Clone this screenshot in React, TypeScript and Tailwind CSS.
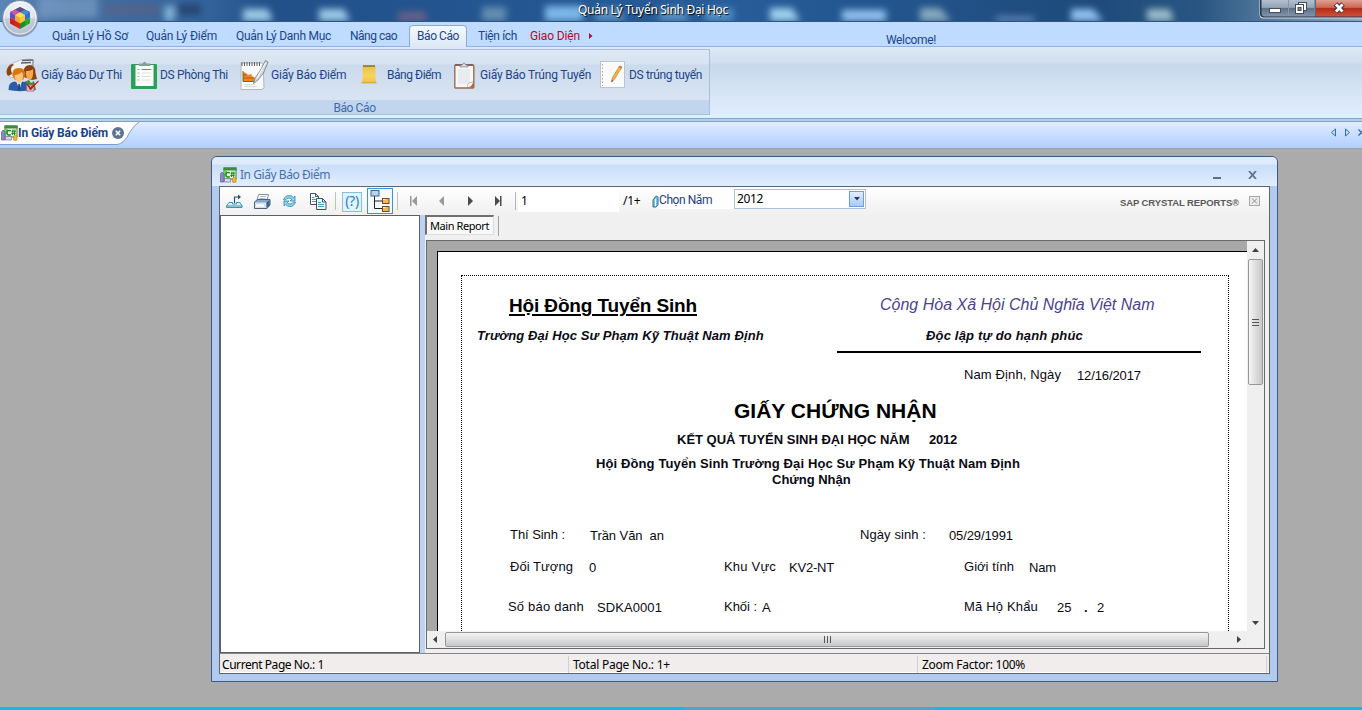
import type { ReactNode } from "react";

function AeroGlass() {
  return (
    <svg className="absolute inset-0" width="1362" height="21" viewBox="0 0 1362 21">
      <defs>
        <linearGradient id="glass" x1="0" y1="0" x2="1" y2="0">
          <stop offset="0" stopColor="#5a85b9" />
          <stop offset=".05" stopColor="#466f9f" />
          <stop offset=".15" stopColor="#33639b" />
          <stop offset=".2" stopColor="#225089" />
          <stop offset=".55" stopColor="#265c99" />
          <stop offset=".8" stopColor="#1e4a7b" />
          <stop offset=".88" stopColor="#285581" />
          <stop offset="1" stopColor="#8fa9c1" />
        </linearGradient>
        <filter id="soft" x="-20%" y="-80%" width="140%" height="260%">
          <feGaussianBlur stdDeviation="3.5" />
        </filter>
      </defs>
      <rect width="1362" height="21" fill="url(#glass)" />
      <g filter="url(#soft)">
        <rect x="38" y="-4" width="60" height="22" fill="#8fb0d4" opacity=".5" />
        <rect x="105" y="5" width="55" height="9" fill="#6b5b78" opacity=".5" />
        <rect x="165" y="6" width="9" height="15" fill="#9fd0ee" opacity=".8" />
        <rect x="177" y="4" width="24" height="11" fill="#1f4069" opacity=".8" />
        <path d="M243 9h25l5 12h-30z" fill="#9ccbe6" />
        <path d="M319 9h25l6 12h-31z" fill="#9ccbe6" />
        <rect x="398" y="12" width="28" height="9" fill="#7d6488" opacity=".8" />
        <rect x="482" y="7" width="24" height="14" fill="#7fa5bd" opacity=".7" />
        <rect x="545" y="6" width="38" height="15" fill="#7db7ea" />
        <path d="M596 8h24l5 13h-30z" fill="#6ea7d6" opacity=".7" />
        <path d="M660 8h24l5 13h-30z" fill="#6ea7d6" opacity=".7" />
        <rect x="705" y="8" width="28" height="13" fill="#5e9ed2" opacity=".8" />
        <path d="M770 8h22l8 13h-30z" fill="#9fd0ee" />
        <rect x="842" y="10" width="44" height="11" fill="#93c1f0" />
        <path d="M920 8h20l11 13h-31z" fill="#85a9bd" />
        <rect x="996" y="17" width="38" height="4" fill="#7698d3" />
        <path d="M1071 9h22l10 12h-32z" fill="#8fc3ef" />
        <path d="M1147 9h23l4 12h-27z" fill="#9bbccb" />
      </g>
    </svg>
  );
}

function WindowButtons() {
  return (
    <svg className="absolute left-[1259px] top-0" width="103" height="19" viewBox="0 0 103 19">
      <defs>
        <linearGradient id="wb" x1="0" y1="0" x2="0" y2="1">
          <stop offset="0" stopColor="#b3c0ce" />
          <stop offset=".45" stopColor="#93a3b6" />
          <stop offset=".5" stopColor="#5d7085" />
          <stop offset="1" stopColor="#8296ab" />
        </linearGradient>
        <linearGradient id="wr" x1="0" y1="0" x2="0" y2="1">
          <stop offset="0" stopColor="#e0a093" />
          <stop offset=".45" stopColor="#cb6753" />
          <stop offset=".5" stopColor="#b32c16" />
          <stop offset="1" stopColor="#cf5038" />
        </linearGradient>
      </defs>
      <path d="M.5 0V14q0 4.500 4 4.500H103V0z" fill="#d6e0ea" />
      <path d="M1 0V13.500q0 4 4 4H103V0z" fill="#26364a" />
      <path d="M2.500 0V12.500q0 4 3 4H29V0z" fill="url(#wb)" />
      <rect x="30" width="25.500" height="16.500" fill="url(#wb)" />
      <rect x="57" width="46" height="16.500" fill="url(#wr)" />
      <path d="M29.500 0v16.500M56 0v16.500" stroke="#e1e8ee" strokeOpacity=".55" />
      <rect x="10.500" y="8.500" width="11" height="4" fill="#fff" stroke="#454c58" />
      <rect x="39.500" y="2.500" width="8" height="8" fill="#fff" stroke="#454c58" />
      <rect x="36.500" y="4.500" width="8" height="9" fill="#fff" stroke="#454c58" />
      <rect x="39" y="7.500" width="3" height="3" fill="#7a8798" stroke="#454c58" />
      <path d="M76.500 4l7.500 8m0-8l-7.500 8" stroke="#4d3a40" strokeWidth="5" />
      <path d="M77 4.300l6.500 7.400m0-7.400l-6.500 7.400" stroke="#fff" strokeWidth="2.800" />
    </svg>
  );
}

function Orb() {
  return (
    <svg className="absolute left-0 top-0" width="40" height="40" viewBox="0 0 40 40">
      <defs>
        <radialGradient id="orb" cx=".5" cy=".35" r=".65">
          <stop offset="0" stopColor="#fff" />
          <stop offset=".6" stopColor="#dfe5ee" />
          <stop offset="1" stopColor="#a9b7ca" />
        </radialGradient>
      </defs>
      <circle cx="20" cy="19" r="18" fill="#5f7797" opacity=".5" />
      <circle cx="20" cy="18" r="17.500" fill="url(#orb)" stroke="#7b8ba3" />
      <path d="M3.500 19a16.500 16.500 0 0 0 33 0q-16-5-33 0z" fill="#aebccd" opacity=".55" />
      <circle cx="20" cy="18" r="16" fill="none" stroke="#fff" opacity=".7" />
      <path d="M20 7l10 5-10 6-10-6z" fill="#7b3fae" />
      <path d="M15 9.500l5-2.500 5 2.500-5 3z" fill="#5a4a8e" />
      <path d="M10 12l5-2.500 5 3-5 2.500z" fill="#d0589f" />
      <path d="M20 12.500l5-3 5 2.500-5 3z" fill="#3f8fd0" />
      <path d="M15 15l5-2.800L25 15l-5 3z" fill="#ffe14d" />
      <path d="M10 12l5 3v5.500l-5-3z" fill="#5a50cf" />
      <path d="M15 15l5 3v5.500l-5-3z" fill="#f3a92a" />
      <path d="M10 17.500l5 3v5.800l-5-2.800z" fill="#c8201d" />
      <path d="M15 20.500l5 3V29l-5-2.700z" fill="#d8261a" />
      <path d="M20 18l5-3v5.500l-5 3z" fill="#ffc928" />
      <path d="M25 15l5-3v5.500l-5 3z" fill="#2e6fd6" />
      <path d="M20 23.500l5-3v5.800L20 29z" fill="#23892a" />
      <path d="M25 20.500l5-3v5.800l-5 3z" fill="#2aa52e" />
    </svg>
  );
}

function PeopleIcon() {
  return (
    <svg width="33" height="34" viewBox="0 0 33 34">
      <path d="M3 7L14 2l10-1 4 1-3 6 1 8-22 4z" fill="#eef1f4" stroke="#a9afb6" strokeWidth=".7" />
      <path d="M16 2.500l11-.5M15 5l10-.5" stroke="#59636f" strokeWidth="1.500" />
      <path d="M27 2v6" stroke="#7b828a" />
      <path d="M2 9q4-5 6-2-3 1-3 5l1 4-4 2q-3-4 0-9z" fill="#8a450f" />
      <path d="M17.500 13q1-6 6-6 6 0 6 8l1.500 6-5 1-8-3z" fill="#8f4210" />
      <path d="M20 13q5 0 7-2 1 10-3.500 11-4.500-2-3.500-9z" fill="#f4a94e" />
      <path d="M16 32l2-8 5-2 2 3 3-2 2 9z" fill="#3f8d34" />
      <path d="M6.500 18q-1-8 6.500-8 7 0 6 8l-2 4H9z" fill="#d9760f" />
      <path d="M8.500 17q5-.5 7-3 1.500 1 1.500 3 .5 6-4 7.500-4.500-1.500-4.500-7.500z" fill="#ffc478" />
      <path d="M2.500 32q-.5-8 6.500-8.500l4 2.500 4-2.500q5.500.5 5 9-10 1.500-19.500-.5z" fill="#2a5ca8" />
      <path d="M10.500 24l2.500 2 2.500-2-2 8z" fill="#eef4fb" />
      <path d="M12.300 26h1.500l.5 5-1.200 1.500L12 31z" fill="#203f74" />
      <path d="M20.500 27h7.500v6h-7.500z" fill="#fff" fillOpacity=".6" stroke="#c2587a" />
      <path d="M21 26l3.500 3.500 8-6.500-8 9z" fill="#d4141c" stroke="#b3101a" strokeWidth=".8" />
    </svg>
  );
}

function ClipboardGreenIcon() {
  return (
    <svg width="27" height="29" viewBox="0 0 27 29">
      <rect y="3" width="26" height="25" rx="1" fill="#2aa255" />
      <rect x="4.500" y="4" width="18" height="21" fill="#fbfdfc" />
      <path d="M8 5V2.500h3.500q2-3.500 4 0H19V5z" fill="#8f9b98" />
      <path d="M6.500 8.500h2M6.500 12h2M6.500 15.500h2M6.500 19h2" stroke="#7fc597" strokeWidth="1.200" />
      <path d="M10.500 8.500h10" stroke="#5e9c74" />
      <path d="M10.500 12h9M10.500 15.500h9M10.500 19h9" stroke="#dbe3de" />
    </svg>
  );
}

function NotebookIcon() {
  return (
    <svg width="29" height="32" viewBox="0 0 29 32">
      <path d="M1 4h22l1 25-2 1.500H1z" fill="#f9f9f7" stroke="#b4b8bb" />
      <path d="M2 7V3m2.500 4V3M7 7V3m2.500 4V3M12 7V3m2.500 4V3M17 7V3m2.500 4V3" stroke="#5d6267" />
      <path d="M3 13l3 1 2 2 3-1 2 3 2 1v4H3z" fill="#ef8422" />
      <path d="M3 19h11M3 16h4" stroke="#b6471a" strokeWidth=".8" />
      <path d="M3 12v10.500h12" stroke="#4b7a3c" fill="none" />
      <path d="M4 25.500h11M4 27.500h13" stroke="#d8dadc" />
      <path d="M25.500 1.500L28 3l-4.500 11L18 21l-4.500 3.500L15 19l5-7z" fill="#d4dadf" stroke="#6f7982" strokeWidth=".8" />
      <path d="M25.500 4L17 19" stroke="#fff" />
    </svg>
  );
}

function YellowPadIcon() {
  return (
    <svg width="17" height="22" viewBox="0 0 17 22">
      <defs>
        <linearGradient id="yp" x1="0" y1="0" x2="0" y2="1">
          <stop offset="0" stopColor="#e5c04e" />
          <stop offset=".6" stopColor="#f5d55f" />
          <stop offset="1" stopColor="#efc53a" />
        </linearGradient>
      </defs>
      <path d="M1.500 2h13v14l.8 2.500H.7L1.500 16z" fill="url(#yp)" />
      <path d="M2 2h12" stroke="#8d7430" strokeWidth="1.600" />
      <path d="M.5 18.800h15" stroke="#c99e29" />
    </svg>
  );
}

function ClipboardBrownIcon() {
  return (
    <svg width="22" height="27" viewBox="0 0 22 27">
      <rect x=".8" y="3" width="19" height="23" rx="1" fill="#f8f8f8" stroke="#9a6a50" strokeWidth="1.400" />
      <rect x="4" y="7" width="12" height="15" fill="#e4e6e9" opacity=".7" />
      <path d="M1 3h18" stroke="#6a4c3c" strokeWidth="1.200" />
      <path d="M6 5V3.500l2-.5q2-4 4 0l2 .5V5z" fill="#d4d8dc" stroke="#7c8288" strokeWidth=".7" />
      <path d="M13 25.500q5 0 6.500-6.500v6.500z" fill="#b06331" />
      <path d="M13 25.500q1-4 2-4.500l4.500-1.500" fill="none" stroke="#999" strokeWidth=".6" />
    </svg>
  );
}

function PencilPageIcon() {
  return (
    <svg width="26" height="28" viewBox="0 0 26 28">
      <rect x=".5" y=".5" width="24" height="26" fill="#fafafa" stroke="#bcc4ce" />
      <path d="M2.500 3v22" stroke="#a5a5a5" strokeDasharray="1.500 2" />
      <path d="M11.500 21l.7-4 7-11.500 2.300 1.300-7 11.500z" fill="#f0b440" stroke="#b07a24" strokeWidth=".6" />
      <path d="M18.900 6l2.400 1.400.9-1.600-2.400-1.400z" fill="#d2655f" />
      <path d="M11.500 21l.4-2 1.400.8z" fill="#444" />
    </svg>
  );
}

function CSharpIcon() {
  return (
    <svg width="17" height="16" viewBox="0 0 17 16">
      <rect x="4" y="1" width="12" height="11" fill="#eef7ea" stroke="#3d7d36" />
      <rect x="3.500" y=".5" width="13" height="3" fill="#3f8a39" />
      <path d="M3 4l3-1 1 1-2 7H3z" fill="#6cc560" />
      <path d="M9.800 5.800q-3.800-1.300-3.800 1.900t3.800 2" fill="none" stroke="#0f8a16" strokeWidth="1.500" />
      <path d="M12 4.500l-.5 5.500M14 4.500l-.5 5.500M10.500 6.200h4.300M10.300 8.400h4.300" stroke="#0f8a16" />
      <path d="M.5 7L2 5l2 2v8H.5z" fill="#8e8bc4" stroke="#5e5a9c" strokeWidth=".7" />
      <path d="M4.500 11.500h2l4 0V15h-6z" fill="#d9d4e6" stroke="#77719c" strokeWidth=".7" />
      <path d="M12.500 11q2-1.500 3.500 0v4q-2 1-3.500 0z" fill="#f2b632" stroke="#b98015" strokeWidth=".6" />
    </svg>
  );
}

function ExportIcon() {
  return (
    <svg width="17" height="14" viewBox="0 0 17 14">
      <path d="M3 8.500h3.500V10h4V8.500H14l2 3.500v1.500H.5V12z" fill="#d4f1f9" stroke="#3f93b0" />
      <path d="M.5 12h16" stroke="#3f93b0" />
      <path d="M8.500 9V3H13" fill="none" stroke="#26566d" strokeWidth="1.200" />
      <path d="M12 .5L15 3l-3 2.500z" fill="#26566d" />
    </svg>
  );
}

function PrinterIcon() {
  return (
    <svg width="17" height="15" viewBox="0 0 17 15">
      <path d="M4.500.5h10l-1.500 6h-10z" fill="#f6f9fc" stroke="#8394a8" />
      <path d="M6 2.500h6M5.500 4.500h6" stroke="#b5c2d0" />
      <path d="M.5 8l3-2.500h12.500V11L13 14.500H.5z" fill="#8ba7c4" stroke="#4c627d" />
      <path d="M1 8.500h11.500V14H1z" fill="#d7e2ec" />
      <path d="M2 11.500h8" stroke="#ffffff" strokeWidth="2" />
      <path d="M12.500 8.500L15.500 6v5l-3 3z" fill="#3c6189" />
    </svg>
  );
}

function RefreshIcon() {
  return (
    <svg width="15" height="14" viewBox="0 0 15 14">
      <path d="M1.500 6q1.500-4.500 5.500-4.500 3 0 4.200 2L13 2v5H8l1.800-1.800Q8.500 4 7 4 4.500 4 3.500 6z" fill="#8fd6ee" stroke="#2f86aa" strokeWidth=".8" />
      <path d="M13.500 8q-1.500 4.500-5.500 4.500-3 0-4.200-2L2 12V7h5L5.200 8.800Q6.500 10 8 10q2.500 0 3.500-2z" fill="#8fd6ee" stroke="#2f86aa" strokeWidth=".8" />
    </svg>
  );
}

function CopyIcon() {
  return (
    <svg width="17" height="17" viewBox="0 0 17 17">
      <path d="M.5.500h5l3 3v8h-8z" fill="#fff" stroke="#42515e" />
      <path d="M5.500.500v3h3" fill="none" stroke="#42515e" />
      <path d="M2 4.500h2.500M2 6.500h5M2 8.500h4" stroke="#4c9bc0" />
      <path d="M6.500 5.500h6l3.500 3.500v7.500H6.500z" fill="#eaf6fb" stroke="#42515e" />
      <path d="M12.500 5.500V9H16" fill="none" stroke="#42515e" />
      <path d="M8 9.500h3M8 11.500h6M8 13.500h6" stroke="#4c9bc0" />
    </svg>
  );
}

function TreeIcon() {
  return (
    <svg width="20" height="22" viewBox="0 0 20 22">
      <path d="M4.500 6v12.500H12M4.500 11H12" fill="none" stroke="#222" />
      <rect x="1" y=".5" width="8" height="5.500" fill="#b7d4ee" stroke="#3d6791" />
      <rect x="12.500" y="8.500" width="6.500" height="5" fill="#f5b55c" stroke="#7a4a15" />
      <rect x="12.500" y="16.500" width="6.500" height="5" fill="#f5b55c" stroke="#7a4a15" />
      <path d="M13 9.500h2.500M13 17.500h2.500" stroke="#fff0d4" />
    </svg>
  );
}

function Nav({ dir, end, color }: { dir: "l" | "r"; end?: boolean; color: string }) {
  return (
    <svg width="8" height="10" viewBox="0 0 8 10" fill={color}>
      {dir === "l" ? <path d="M7 0v10L2 5z" /> : <path d="M1 0v10l5-5z" />}
      {end && (dir === "l" ? <rect width="1.500" height="10" /> : <rect x="6" width="1.500" height="10" />)}
    </svg>
  );
}

function RibbonItem({ icon, label, iconBox, text }: { icon: ReactNode; label: string; iconBox: string; text: string }) {
  return (
    <div className="flex h-full items-center">
      <div className={`flex shrink-0 justify-start ${iconBox}`}>{icon}</div>
      <span className={`whitespace-nowrap ${text}`}>{label}</span>
    </div>
  );
}

function Cell({ c, children }: { c: string; children: ReactNode }) {
  return <span className={`shrink-0 whitespace-pre ${c}`}>{children}</span>;
}

function ReportPage() {
  return (
    <div className="ml-[10px] mt-[10px] h-[380px] overflow-hidden border-l border-t border-black bg-white">
      <div className="ml-[23px] mt-[23px] h-[420px] w-[768px] border border-dotted border-black pt-[14px] text-[13px] text-[#0a0a14]">
        <div className="flex h-[32px] items-center pl-[47px]">
          <Cell c="w-[371px] pt-[1px] text-[19px] font-bold tracking-[-0.14px] underline decoration-2 underline-offset-2 text-black">Hội Đồng Tuyển Sinh</Cell>
          <Cell c="mb-[3px] text-[16px] italic text-[#4b4390]">Cộng Hòa Xã Hội Chủ Nghĩa Việt Nam</Cell>
        </div>
        <div className="flex h-[26px] items-center pl-[15px] pt-[2px] font-bold italic">
          <Cell c="w-[449px] tracking-[0.1px]">Trường Đại Học Sư Phạm Kỹ Thuật Nam Định</Cell>
          <Cell c="tracking-[0.17px]">Độc lập tự do hạnh phúc</Cell>
        </div>
        <div className="ml-[375px] mt-[3px] h-[2px] w-[364px] bg-black" />
        <div className="flex h-[44px] items-center pl-[502px]">
          <Cell c="w-[113px] tracking-[0.12px]">Nam Định, Ngày</Cell>
          <Cell c="pt-px tracking-[-0.11px]">12/16/2017</Cell>
        </div>
        <div className="flex h-[28px] items-center pl-[272px] text-[21px] font-bold text-black">
          <Cell c="">GIẤY CHỨNG NHẬN</Cell>
        </div>
        <div className="flex h-[28px] items-center pl-[215px] pt-[2px] font-bold">
          <Cell c="w-[252px]">KẾT QUẢ TUYỂN SINH ĐẠI HỌC NĂM</Cell>
          <Cell c="tracking-[-0.2px]">2012</Cell>
        </div>
        <div className="flex h-[20px] items-center pl-[134px] pt-[2px] font-bold">
          <Cell c="tracking-[0.114px]">Hội Đồng Tuyển Sinh Trường Đại Học Sư Phạm Kỹ Thuật Nam Định</Cell>
        </div>
        <div className="flex h-[12px] items-center pl-[310px] pt-[2px] font-bold">
          <Cell c="">Chứng Nhận</Cell>
        </div>
        <div className="mt-[34px] flex h-[32px] items-center pl-[48px]">
          <Cell c="w-[80px] tracking-[-0.06px]">Thí Sinh :</Cell>
          <Cell c="w-[270px] pt-[2px] tracking-[-0.06px]">{"Trần Văn  an"}</Cell>
          <Cell c="w-[89px] tracking-[0.09px]">Ngày sinh :</Cell>
          <Cell c="pt-[2px] tracking-[-0.11px]">05/29/1991</Cell>
        </div>
        <div className="flex h-[32px] items-center pl-[48px]">
          <Cell c="w-[79px] tracking-[0.05px]">Đối Tượng</Cell>
          <Cell c="w-[135px] pt-[2px]">0</Cell>
          <Cell c="w-[65px] tracking-[0.2px]">Khu Vực</Cell>
          <Cell c="w-[175px] pt-[2px] tracking-[-0.2px]">KV2-NT</Cell>
          <Cell c="w-[65px] tracking-[0.03px]">Giới tính</Cell>
          <Cell c="pt-[2px] tracking-[-0.15px]">Nam</Cell>
        </div>
        <div className="flex h-[48px] items-center pl-[46px]">
          <Cell c="w-[89px] tracking-[0.2px]">Số báo danh</Cell>
          <Cell c="w-[127px] pt-[2px] tracking-[0.08px]">SDKA0001</Cell>
          <Cell c="w-[38px] tracking-[-0.04px]">Khối :</Cell>
          <Cell c="w-[202px] pt-[2px]">A</Cell>
          <Cell c="w-[93px] tracking-[0.17px]">Mã Hộ Khẩu</Cell>
          <Cell c="w-[27px] pt-[2px]">25</Cell>
          <Cell c="w-[13px] pt-[2px] font-bold">.</Cell>
          <Cell c="pt-[2px]">2</Cell>
        </div>
      </div>
    </div>
  );
}

function ReportToolbar() {
  return (
    <div className="flex h-[28px] items-center rounded-r-[4px] bg-linear-to-b from-white to-[#f0f0f0] pl-[6px] font-['Noto_Sans',sans-serif] text-[12px] text-black">
      <div className="w-[28px]"><ExportIcon /></div>
      <div className="w-[28px]"><PrinterIcon /></div>
      <div className="w-[28px]"><RefreshIcon /></div>
      <div className="w-[25px]"><CopyIcon /></div>
      <div className="mr-[6px] h-[18px] w-px bg-[#c0c0c0]" />
      <div className="mt-px flex h-[20px] w-[20px] items-center justify-center border border-[#7fc1e8] bg-[#e3f3fd] pb-[2px] text-[14px] leading-none tracking-[-0.3px] text-[#2b7fc2]">(?)</div>
      <div className="ml-[5px] flex h-[26px] w-[26px] items-center justify-center border border-[#3c93dc] bg-[#f4faff]"><TreeIcon /></div>
      <div className="ml-[4px] mr-[12px] h-[18px] w-px bg-[#c0c0c0]" />
      <div className="w-[27px]"><Nav dir="l" end color="#9a9a9a" /></div>
      <div className="w-[30px]"><Nav dir="l" color="#9a9a9a" /></div>
      <div className="w-[27px]"><Nav dir="r" color="#4a4a4a" /></div>
      <div className="w-[21px]"><Nav dir="r" end color="#4a4a4a" /></div>
      <div className="h-[18px] w-px bg-[#b4b4b4]" />
      <div className="ml-[2px] h-[21px] w-[101px] bg-white pl-[3px] leading-[19px]">1</div>
      <span className="ml-[4px] w-[29px] tracking-[-0.3px]">/1+</span>
      <svg width="7" height="13" viewBox="0 0 7 13">
        <path d="M1 12V5l3-4 2 1v8l-2 2z" fill="#7cc3df" stroke="#2e7396" />
        <path d="M3.500 4v7" stroke="#fff" />
      </svg>
      <div className="mb-[4px] h-[19px] w-[75px] whitespace-nowrap bg-white font-[Roboto,sans-serif] leading-[20px] tracking-[-0.43px] text-[#1e3d7b]">Chọn Năm</div>
      <div className="mb-[4px] flex h-[20px] w-[132px] items-center justify-between border border-[#abc1de] bg-white pl-[2px] pr-px">
        <span className="tracking-[-0.4px]">2012</span>
        <div className="flex h-[16px] w-[15px] items-center justify-center border border-[#6f9dd9] bg-linear-to-b from-[#e3eefd] to-[#a9c9f8]">
          <svg width="6" height="4" viewBox="0 0 6 4"><path d="M0 0h6L3 3.500z" fill="#1c3c6e" /></svg>
        </div>
      </div>
      <span className="ml-[254px] mt-[4px] w-[129px] whitespace-nowrap font-['Liberation_Sans',sans-serif] text-[9.500px] font-bold tracking-[-0.1px] text-[#5a5a5a]">
        SAP CRYSTAL REPORTS<span className="text-[9px]">®</span>
      </span>
      <svg width="11" height="10" viewBox="0 0 11 10">
        <rect x=".5" y=".5" width="10" height="9" fill="#ececec" stroke="#a8a8a8" />
        <path d="M3 2.500l5 5m0-5l-5 5" stroke="#8e8e8e" />
      </svg>
    </div>
  );
}

function Viewer() {
  return (
    <div className="ml-px mt-[4px] grid h-[409px] w-[839px] grid-cols-[820px_17px] grid-rows-[390px_17px] border border-[#696969] bg-[#f0f0f0]">
      <div className="overflow-hidden bg-[#a8a8a8] font-['Liberation_Sans',sans-serif]"><ReportPage /></div>
      <div className="flex flex-col items-center bg-[#efefef]">
        <svg className="mt-[7px]" width="7" height="4" viewBox="0 0 7 4"><path d="M0 4h7L3.500 0z" fill="#404040" /></svg>
        <div className="mt-[7px] flex h-[126px] w-[15px] flex-col items-center justify-center gap-[2px] rounded-[2px] border border-[#979797] bg-linear-to-r from-[#f5f5f5] via-[#dedede] to-[#c6c8ca]">
          <i className="h-px w-[7px] bg-[#555]" /><i className="h-px w-[7px] bg-[#555]" /><i className="h-px w-[7px] bg-[#555]" />
        </div>
        <svg className="mt-auto mb-[6px]" width="7" height="4" viewBox="0 0 7 4"><path d="M0 0h7L3.500 4z" fill="#404040" /></svg>
      </div>
      <div className="flex items-center bg-[#efefef]">
        <svg className="ml-[6px]" width="4" height="7" viewBox="0 0 4 7"><path d="M4 0v7L0 3.500z" fill="#404040" /></svg>
        <div className="ml-[8px] flex h-[15px] w-[764px] items-center justify-center gap-[2px] rounded-[2px] border border-[#979797] bg-linear-to-b from-[#f5f5f5] via-[#dedede] to-[#c6c8ca]">
          <i className="h-[7px] w-px bg-[#555]" /><i className="h-[7px] w-px bg-[#555]" /><i className="h-[7px] w-px bg-[#555]" />
        </div>
        <svg className="ml-auto mr-[6px]" width="4" height="7" viewBox="0 0 4 7"><path d="M0 0v7l4-3.500z" fill="#404040" /></svg>
      </div>
      <div className="bg-[#f0f0f0]" />
    </div>
  );
}

function ReportWindow() {
  return (
    <div className="ml-[211px] mt-[7px] h-[526px] w-[1067px] overflow-hidden rounded-t-[6px] border border-[#3d5a85] bg-[#b1caee]">
      <div className="flex h-[29px] items-center bg-[linear-gradient(#dfeafa_0,#dfeafa_7px,#c8ddf8_8px,#e1edfd_28px)] pl-[8px] pt-[6px]">
        <CSharpIcon />
        <span className="ml-[3px] w-[973px] whitespace-nowrap font-['Noto_Sans',sans-serif] text-[12px] tracking-[-0.45px] text-[#4470ae]">In Giấy Báo Điểm</span>
        <div className="mt-[6px] h-[2px] w-[8px] bg-[#5b6f90]" />
        <svg className="ml-[27px]" width="9" height="8" viewBox="0 0 9 8"><path d="M1 0l7 8M8 0L1 8" stroke="#5b7193" strokeWidth="1.800" /></svg>
      </div>
      <div className="ml-[7px] h-[488px] w-[1051px] border border-[#5a6674] bg-[#f0f0f0]">
        <ReportToolbar />
        <div className="flex h-[438px]">
          <div className="w-[200px] border border-[#5c6066] bg-white" />
          <div className="w-[5px] bg-[#bcd3f3]" />
          <div className="flex-1">
            <div className="flex h-[21px] items-start font-['Noto_Sans',sans-serif] text-[11px] text-black">
              <div className="h-[20px] w-[69px] whitespace-nowrap border-2 border-b border-r border-[#707070] border-b-[#dcdcdc] border-r-[#dcdcdc] bg-[#f8f8f8] pl-[3px] leading-[18px] tracking-[-0.42px]">Main Report</div>
              <div className="ml-[4px] mt-px h-[20px] w-px bg-[#a0a0a0]" />
            </div>
            <Viewer />
          </div>
        </div>
        <div className="flex h-[20px] items-center border-b border-t border-b-white border-t-[#858585] bg-[#f0edec] pt-[2px] font-['Noto_Sans',sans-serif] text-[12px] leading-[17px] text-black">
          <span className="w-[348px] pl-[2px] tracking-[-0.44px]">Current Page No.: 1</span>
          <span className="w-[349px] border-l border-[#d0d0d0] pl-[4px] tracking-[-0.24px]">Total Page No.: 1+</span>
          <span className="w-[350px] border-x border-[#d0d0d0] pl-[4px] tracking-[-0.29px]">Zoom Factor: 100%</span>
        </div>
      </div>
    </div>
  );
}

export default function App() {
  return (
    <div className="relative flex h-[710px] w-[1362px] flex-col overflow-hidden bg-[#ababab] font-[Roboto,sans-serif] text-[12px] text-[#1c4589]">
      <header className="relative flex h-[22px] shrink-0 justify-center border-b border-[#35547d] bg-[#24518a]">
        <AeroGlass />
        <span className="relative whitespace-nowrap pr-[56px] font-['Noto_Sans',sans-serif] leading-[20px] tracking-[-0.3px] text-white [text-shadow:1px_1px_1px_#000]">Quản Lý Tuyển Sinh Đại Học</span>
        <WindowButtons />
      </header>

      <nav className="flex h-[25px] shrink-0 items-center whitespace-nowrap border-b border-[#8fb0e0] bg-[#bfdbff] pl-[52px] pt-[3px]">
        <span className="w-[94px] tracking-[-0.13px]">Quản Lý Hồ Sơ</span>
        <span className="w-[90px] tracking-[-0.18px]">Quản Lý Điểm</span>
        <span className="w-[114px] tracking-[-0.27px]">Quản Lý Danh Mục</span>
        <span className="w-[59px] tracking-[-0.5px]">Nâng cao</span>
        <span className="-mb-px h-[22px] w-[58px] rounded-t-[4px] border border-b-0 border-[#86abdc] bg-linear-to-b from-[#f5f9ff] to-[#dde8f6] pl-[7px] leading-[21px] tracking-[-0.43px]">Báo Cáo</span>
        <span className="ml-[11px] w-[52px] tracking-[-0.36px]">Tiện ích</span>
        <span className="w-[59px] tracking-[-0.14px] text-[#b00d2a]">Giao Diện</span>
        <svg width="4" height="6" viewBox="0 0 4 6"><path d="M0 0v6l3.500-3z" fill="#b00d2a" /></svg>
        <span className="ml-[293px] mt-[9px] tracking-[-0.36px]">Welcome!</span>
      </nav>
      <Orb />

      <section className="h-[75px] shrink-0 bg-[linear-gradient(#dfe9f6_0,#cfdded_16px,#c8d8eb_17px,#e1edfe_68px,#d3f5ff_69px,#d3f5ff_71px,#8aa5cb_71px,#8aa5cb_72px,#b8cdea_72px,#b8cdea_74px,#849fc8_74px)] pt-[2px]">
        <div className="h-[66px] w-[710px] border border-l-0 border-[#a9c0dd] bg-[linear-gradient(#dfe8f4_0,#d8e3f1_14px,#cbdaec_15px,#d9e4f3_50px)]">
          <div className="flex h-[50px] pl-[6px]">
            <RibbonItem icon={<PeopleIcon />} label="Giấy Báo Dự Thi" iconBox="w-[35px]" text="w-[90px] tracking-[-0.25px]" />
            <RibbonItem icon={<ClipboardGreenIcon />} label="DS Phòng Thi" iconBox="w-[29px]" text="w-[80px] tracking-[-0.32px]" />
            <RibbonItem icon={<NotebookIcon />} label="Giấy Báo Điểm" iconBox="w-[31px]" text="w-[90px] tracking-[-0.2px]" />
            <RibbonItem icon={<YellowPadIcon />} label="Bảng Điểm" iconBox="w-[26px]" text="w-[67px] tracking-[-0.46px]" />
            <RibbonItem icon={<ClipboardBrownIcon />} label="Giấy Báo Trúng Tuyển" iconBox="w-[26px]" text="w-[120px] tracking-[-0.2px]" />
            <RibbonItem icon={<PencilPageIcon />} label="DS trúng tuyển" iconBox="w-[29px]" text="tracking-[-0.36px]" />
          </div>
          <div className="h-[14px] bg-[#c1d6ee] text-center leading-[16px] tracking-[-0.4px] text-[#3e6aaa]">Báo Cáo</div>
        </div>
      </section>

      <div className="relative flex h-[27px] shrink-0 items-center border-b border-[#9aa3b0] bg-linear-to-b from-[#e1ecff] to-[#b0cfff] pb-[5px]">
        <svg className="absolute left-0 top-0" width="142" height="24" viewBox="0 0 142 24">
          <path d="M0 0H139Q135 2 130 10 124 22 117 22.500H0z" fill="#fff" />
          <path d="M139 .5Q135 2 130 10 124 22 117 22.500H0" fill="none" stroke="#7f9fd0" />
        </svg>
        <div className="relative flex items-center">
          <div className="ml-px"><CSharpIcon /></div>
          <span className="w-[94px] whitespace-nowrap font-bold tracking-[-0.11px] text-[#17438a]">In Giấy Báo Điểm</span>
          <svg width="12" height="12" viewBox="0 0 12 12">
            <circle cx="6" cy="6" r="6" fill="#5f7391" />
            <path d="M3.800 3.800l4.400 4.400m0-4.400L3.800 8.200" stroke="#fff" strokeWidth="1.600" />
          </svg>
        </div>
        <svg className="ml-auto" width="32" height="9" viewBox="0 0 32 9" fill="none" stroke="#2c6cc9">
          <path d="M5.500 1v7L1.500 4.500z" />
          <path d="M15.500 1v7l4-3.500z" />
          <path d="M28.500 1.500l6 6m-6 0l6-6" strokeWidth="1.400" />
        </svg>
      </div>

      <main className="flex-1"><ReportWindow /></main>

      <footer className="flex h-[3px] shrink-0 bg-[#14b6f0]">
        <div className="ml-[684px] h-full w-[250px] bg-[#4ba5cf]" />
      </footer>
    </div>
  );
}
